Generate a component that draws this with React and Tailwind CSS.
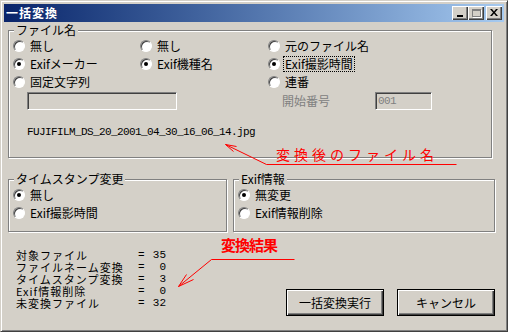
import React from 'react'

const etched = 'border border-[#808080] shadow-[inset_1px_1px_0_#fff,1px_1px_0_#fff]'
const sunken = 'border border-t-[#808080] border-l-[#808080] border-b-white border-r-white shadow-[inset_1px_1px_0_#404040,inset_-1px_-1px_0_#d4d0c8]'

function Radio({ checked, focus, children }) {
  return (
    <div className="flex items-center h-[18px]">
      <span className="flex items-center justify-center w-[12px] h-[12px] shrink-0 rounded-full bg-white border border-t-[#808080] border-l-[#808080] border-b-white border-r-white shadow-[inset_1px_1px_0_#404040]">
        {checked && <span className="w-[4px] h-[4px] rounded-full bg-black" />}
      </span>
      <span className={focus ? 'ml-[4px] px-[1px] leading-[14px] outline outline-1 outline-dotted outline-black' : 'ml-[5px] leading-[14px]'}>
        {children}
      </span>
    </div>
  )
}

function GroupBox({ label, className, children }) {
  return (
    <div className={`relative ${etched} ${className}`}>
      <span className="absolute left-[5px] -top-[8px] px-[2px] bg-[#d4d0c8] leading-[14px]">{label}</span>
      {children}
    </div>
  )
}

function TitleButton({ children }) {
  return (
    <div className="flex items-center justify-center w-[16px] h-[14px] bg-[#d4d0c8] shadow-[inset_1px_1px_0_#fff,inset_-1px_-1px_0_#404040,inset_-2px_-2px_0_#808080]">
      {children}
    </div>
  )
}

function Button({ children }) {
  return (
    <button className="w-[98px] h-[27px] bg-[#d4d0c8] border border-black shadow-[inset_1px_1px_0_#fff,inset_-1px_-1px_0_#404040,inset_-2px_-2px_0_#808080] text-[12px] leading-[14px] text-black">
      {children}
    </button>
  )
}

const results = [
  ['対象ファイル', '35'],
  ['ファイルネーム変換', '0'],
  ['タイムスタンプ変換', '3'],
  ['Exif情報削除', '0'],
  ['未変換ファイル', '32'],
]

export default function App() {
  return (
    <div className="relative w-[508px] h-[332px] p-[3px] bg-[#d4d0c8] border border-t-[#d4d0c8] border-l-[#d4d0c8] border-r-[#404040] border-b-[#404040] shadow-[inset_1px_1px_0_#fff,inset_-1px_-1px_0_#808080] text-[12px] text-black font-['Noto_Sans_CJK_JP',sans-serif] overflow-hidden">
      {/* title bar */}
      <div className="flex items-center h-[18px] bg-gradient-to-r from-[#0a246a] to-[#a6caf0]">
        <span className="pl-[2px] text-white font-bold tracking-[1px] leading-[14px]">一括変換</span>
        <div className="ml-auto mr-[2px] flex items-center">
          <TitleButton>
            <span className="w-[6px] h-[2px] bg-black mt-[6px] mr-[1px]" />
          </TitleButton>
          <TitleButton>
            <span className="w-[9px] h-[8px] border border-t-2 border-[#808080] shadow-[1px_1px_0_#fff] -mt-[1px]" />
          </TitleButton>
          <div className="ml-[2px]">
            <TitleButton>
              <svg width="8" height="7" viewBox="0 0 8 7" className="-mt-[1px]">
                <path d="M0 0h2l2 2.5L6 0h2L5 3.5 8 7H6L4 4.5 2 7H0l3-3.5z" fill="#000" />
              </svg>
            </TitleButton>
          </div>
        </div>
      </div>

      {/* client */}
      <div className="pl-[4px] pt-[8px]">
        <GroupBox label="ファイル名" className="w-[484px] h-[128px]">
          <div className="pt-[6px] pl-[4px]">
            <div className="grid grid-cols-[127px_128px_1fr]">
              <Radio>無し</Radio>
              <Radio>無し</Radio>
              <Radio>元のファイル名</Radio>
              <Radio checked>Exifメーカー</Radio>
              <Radio checked>Exif機種名</Radio>
              <Radio checked focus>Exif撮影時間</Radio>
              <Radio>固定文字列</Radio>
              <div />
              <Radio>連番</Radio>
              <div className="mt-[1px] ml-[14px] h-[18px]">
                <div className={`w-[150px] h-[18px] bg-[#d4d0c8] ${sunken}`} />
              </div>
              <div />
              <div className="mt-[1px] flex items-center h-[18px]">
                <span className="ml-[14px] w-[93px] text-[#808080] leading-[14px]">開始番号</span>
                <div className={`w-[57px] h-[18px] bg-[#d4d0c8] ${sunken} flex items-center pl-[2px] text-[#808080] font-['Liberation_Mono',monospace] text-[11px] tracking-[-0.6px]`}>
                  001
                </div>
              </div>
            </div>
            <div className="mt-[14px] ml-[14px] h-[16px] flex items-center font-['Liberation_Mono',monospace] text-[11px] tracking-[-0.6px]">
              FUJIFILM_DS_20_2001_04_30_16_06_14.jpg
            </div>
          </div>
        </GroupBox>

        <div className="mt-[21px] flex">
          <GroupBox label="タイムスタンプ変更" className="w-[219px] h-[53px]">
            <div className="pt-[6px] pl-[4px]">
              <Radio checked>無し</Radio>
              <Radio>Exif撮影時間</Radio>
            </div>
          </GroupBox>
          <GroupBox label="Exif情報" className="ml-[6px] w-[262px] h-[53px]">
            <div className="pt-[6px] pl-[4px]">
              <Radio checked>無変更</Radio>
              <Radio>Exif情報削除</Radio>
            </div>
          </GroupBox>
        </div>

        <div className="flex">
          <div className="mt-[17px] pl-[8px]">
            {results.map(([label, n]) => (
              <div key={label} className="flex items-center h-[12px] leading-[12px]">
                <span className="w-[122px] text-[11px] tracking-[1px]">{label}</span>
                <span className="w-[6px] font-['Liberation_Mono',monospace] text-[11px]">=</span>
                <span className="w-[22px] text-right font-['Liberation_Mono',monospace] text-[11px]">{n}</span>
              </div>
            ))}
          </div>
          <div className="ml-auto mr-[9px] mt-[57px] flex gap-[13px]">
            <Button>一括変換実行</Button>
            <Button>キャンセル</Button>
          </div>
        </div>
      </div>

      {/* red annotations */}
      <svg className="absolute left-0 top-0 pointer-events-none" width="508" height="332" viewBox="0 0 508 332">
        <g stroke="#ff0000" strokeWidth="1" fill="none">
          <path d="M265.5 163.5H455.5M265.5 163.5L224.5 143.5M224.5 143.5L235.5 145.5M224.5 143.5L232.5 150.5" />
          <path d="M210.5 258.5H293.5M210.5 258.5L177.5 285.5M177.5 285.5L185.5 273.5M177.5 285.5L192.5 278.5" />
        </g>
      </svg>
      <span className="absolute left-[275px] top-[146px] text-[14px] leading-[15px] tracking-[4px] text-[#ff0000]">変換後のファイル名</span>
      <span className="absolute left-[220px] top-[236px] text-[15px] leading-[16px] tracking-[-1px] font-bold text-[#ff0000]">変換結果</span>
    </div>
  )
}
